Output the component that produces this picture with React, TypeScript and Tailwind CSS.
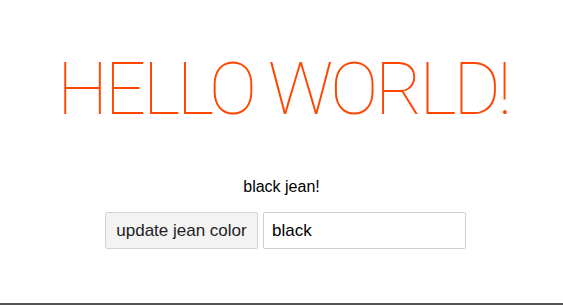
import { useState } from "react";

export default function App() {
  const [color, setColor] = useState("black");
  const [input, setInput] = useState("black");

  return (
    <div className="h-[305px] bg-white flex flex-col items-center border-b-2 border-[#555] font-['Liberation_Sans',Arial,sans-serif]">
      <h1 className="mt-[50px] pl-[3px] text-[72px] leading-[80px] tracking-[-3px] font-thin text-[#ff4500] font-['Roboto','Inter',sans-serif]">
        HELLO WORLD!
      </h1>
      <p className="mt-[47px] text-[16px] leading-[20px] text-black">{color} jean!</p>
      <div className="mt-[15px] pl-[8px] flex gap-[5px]">
        <button
          onClick={() => setColor(input)}
          className="w-[153px] h-[37px] bg-[#f3f3f3] border border-[#d4d4d4] rounded-[2px] text-[17px] text-[#222]"
        >
          update jean color
        </button>
        <input
          value={input}
          onChange={(e) => setInput(e.target.value)}
          className="w-[203px] h-[37px] border border-[#d0d0d0] rounded-[2px] px-[8px] text-[17px] text-black outline-none"
        />
      </div>
    </div>
  );
}
